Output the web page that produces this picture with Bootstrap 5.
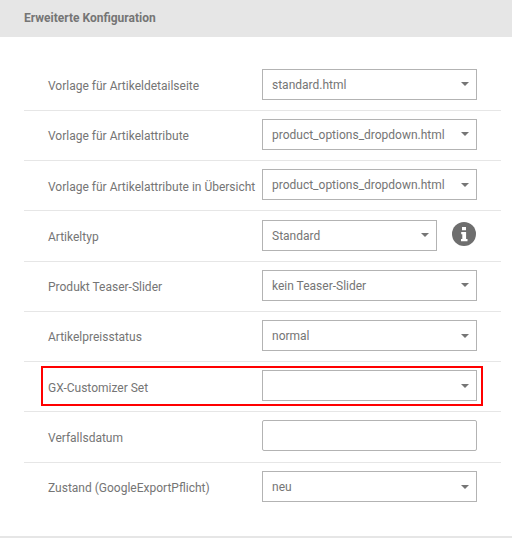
<!DOCTYPE html>
<html lang="de">
<head>
<meta charset="utf-8">
<title>Erweiterte Konfiguration</title>
<link href="https://cdn.jsdelivr.net/npm/bootstrap@5.3.0/dist/css/bootstrap.min.css" rel="stylesheet">
<style>
html,body{margin:0;background:#fff;font-family:Roboto,sans-serif;color:#757575;overflow:hidden}
.cfg-head{height:37px;background:#e6e6e6;padding:0 24px;font-size:12px;font-weight:700;line-height:37px;color:#757575}
.cfg-body{padding:23.4px 11px 0 24px;height:500.5px;border-bottom:2px solid #e6e6e6}
.cfg-row{height:50.3px;border-bottom:1px solid #e6e6e6;padding:8.25px 0 0 24px;position:relative}
.cfg-row:last-child{border-bottom:0}
.cfg-label{width:214px;flex:none;font-size:12px;line-height:31px;padding-top:2.3px;white-space:nowrap;color:#757575}
.cfg-ctl{width:215px;height:31px;border:1px solid #b3b3b3;border-radius:0;font-size:12px;color:#757575;padding:1px 24px 0 9px;line-height:28px;background-color:#fff;box-shadow:none;font-family:Roboto,sans-serif;background-position:right 7px center;background-size:8px 4px;background-image:url("data:image/svg+xml,%3Csvg xmlns='http://www.w3.org/2000/svg' viewBox='0 0 8 4'%3E%3Cpath fill='%23757575' d='M0 0h8L4 4z'/%3E%3C/svg%3E")}
input.cfg-ctl{background-image:none;border-radius:2px;margin-top:-.5px}
.cfg-short{width:175px}
.cfg-info{width:24px;height:24px;margin:2.5px 0 0 15px;flex:none}
.cfg-mark{position:absolute;left:17px;top:3.8px;width:442px;height:40px;border:2px solid #f00;pointer-events:none}
</style>
</head>
<body>
<div class="cfg-head">Erweiterte Konfiguration</div>
<div class="cfg-body">
  <div class="cfg-row d-flex align-items-start"><label class="cfg-label">Vorlage für Artikeldetailseite</label><select class="form-select cfg-ctl"><option>standard.html</option></select></div>
  <div class="cfg-row d-flex align-items-start"><label class="cfg-label">Vorlage für Artikelattribute</label><select class="form-select cfg-ctl"><option>product_options_dropdown.html</option></select></div>
  <div class="cfg-row d-flex align-items-start"><label class="cfg-label">Vorlage für Artikelattribute in Übersicht</label><select class="form-select cfg-ctl"><option>product_options_dropdown.html</option></select></div>
  <div class="cfg-row d-flex align-items-start"><label class="cfg-label">Artikeltyp</label><select class="form-select cfg-ctl cfg-short"><option>Standard</option></select>
    <svg class="cfg-info" viewBox="0 0 24 24" aria-label="Info"><circle cx="12" cy="12" r="12" fill="#6e6e6e"/><path fill="#fff" d="M10 5h4v3.2h-4zM9.2 10h4.9v7h1.4v2.3H9v-2.3h1.3v-4.7H9.2z"/></svg></div>
  <div class="cfg-row d-flex align-items-start"><label class="cfg-label">Produkt Teaser-Slider</label><select class="form-select cfg-ctl"><option>kein Teaser-Slider</option></select></div>
  <div class="cfg-row d-flex align-items-start"><label class="cfg-label">Artikelpreisstatus</label><select class="form-select cfg-ctl"><option>normal</option></select></div>
  <div class="cfg-row d-flex align-items-start"><label class="cfg-label">GX-Customizer Set</label><select class="form-select cfg-ctl"><option></option></select><span class="cfg-mark"></span></div>
  <div class="cfg-row d-flex align-items-start"><label class="cfg-label">Verfallsdatum</label><input class="form-control cfg-ctl" type="text"></div>
  <div class="cfg-row d-flex align-items-start"><label class="cfg-label">Zustand (GoogleExportPflicht)</label><select class="form-select cfg-ctl"><option>neu</option></select></div>
</div>
<script src="https://cdn.jsdelivr.net/npm/bootstrap@5.3.0/dist/js/bootstrap.bundle.min.js"></script>
</body>
</html>
